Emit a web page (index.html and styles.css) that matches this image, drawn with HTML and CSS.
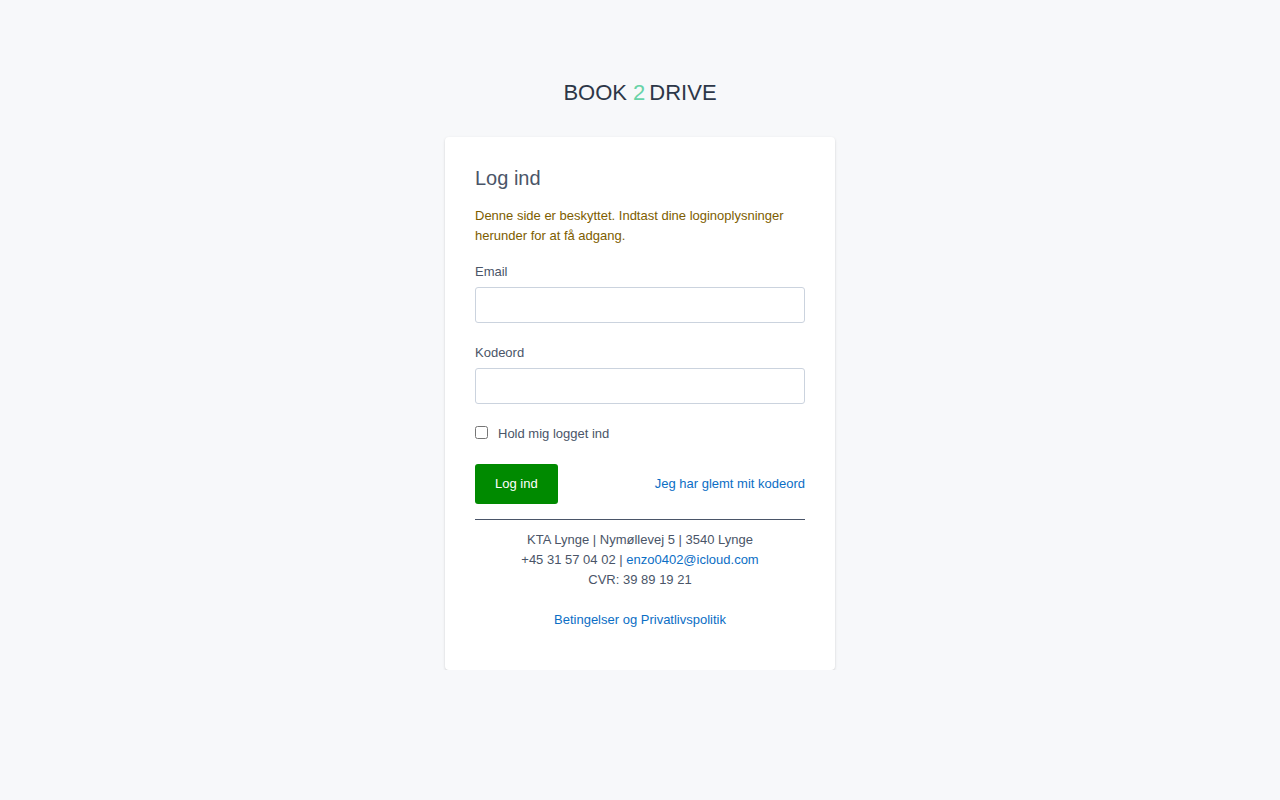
FILE: index.html
```html
<!DOCTYPE html>
<html lang="da">
<head>
<meta charset="utf-8">
<title>Log ind - Book 2 Drive</title>
<link rel="stylesheet" href="styles.css">
</head>
<body>
<main class="page">
  <div class="logo">BOOK <span class="logo-num">2</span><span class="logo-end">DRIVE</span></div>
  <section class="card">
    <h1 class="title">Log ind</h1>
    <p class="notice">Denne side er beskyttet. Indtast dine loginoplysninger herunder for at få adgang.</p>
    <form class="form">
      <div class="field">
        <label class="label" for="email">Email</label>
        <input class="input" id="email" type="email">
      </div>
      <div class="field">
        <label class="label" for="pw">Kodeord</label>
        <input class="input" id="pw" type="password">
      </div>
      <label class="remember"><input class="check" type="checkbox"> Hold mig logget ind</label>
      <div class="actions">
        <button class="btn" type="button">Log ind</button>
        <a class="link" href="#">Jeg har glemt mit kodeord</a>
      </div>
    </form>
    <footer class="footer">
      <div>KTA Lynge | Nymøllevej 5 | 3540 Lynge</div>
      <div>+45 31 57 04 02 | <a class="link" href="#">enzo0402@icloud.com</a></div>
      <div>CVR: 39 89 19 21</div>
      <div class="terms"><a class="link" href="#">Betingelser og Privatlivspolitik</a></div>
    </footer>
  </section>
</main>
</body>
</html>
```
FILE: styles.css
```css
* { box-sizing: border-box; }
html, body { margin: 0; padding: 0; }
body {
  background: #f7f8fa;
  font-family: "Liberation Sans", Arial, sans-serif;
  color: #4a5568;
  font-size: 13px;
}
.page {
  display: flex;
  flex-direction: column;
  align-items: center;
  padding-top: 80px;
}
.logo {
  font-size: 22px;
  line-height: 26px;
  color: #2d3748;
  margin-bottom: 31px;
}
.logo-num { color: #68d3a8; }
.logo-end { margin-left: 4px; }
.card {
  width: 390px;
  background: #fff;
  border-radius: 4px;
  box-shadow: 0 1px 3px rgba(0,0,0,0.12), 0 1px 2px rgba(0,0,0,0.06);
  padding: 29px 30px 40px;
}
.title {
  margin: 0;
  font-size: 20px;
  line-height: 24px;
  font-weight: normal;
  color: #4a5568;
}
.notice {
  margin: 16px 0 0;
  line-height: 20px;
  color: #7d5d00;
}
.form { margin-top: 16px; }
.field { display: flex; flex-direction: column; margin-bottom: 20px; }
.label { line-height: 20px; margin-bottom: 5px; }
.input {
  height: 36px;
  border: 1px solid #cbd3de;
  border-radius: 3px;
  font: inherit;
  padding: 0 10px;
}
.remember {
  display: flex;
  align-items: center;
  line-height: 20px;
}
.check { margin: 0 10px 3px 0; width: 13px; height: 13px; }
.actions {
  display: flex;
  justify-content: space-between;
  align-items: center;
  margin-top: 20px;
}
.btn {
  height: 40px;
  padding: 0 20px 2px;
  background: #008a00;
  color: #fff;
  border: 0;
  border-radius: 3px;
  font: inherit;
  cursor: pointer;
}
.link { color: #0b6ec5; text-decoration: none; }
.actions .link { margin-bottom: 1px; }
.footer {
  margin-top: 15px;
  border-top: 1px solid #4a5568;
  padding-top: 10px;
  text-align: center;
  line-height: 20px;
}
.terms { margin-top: 20px; }
```
